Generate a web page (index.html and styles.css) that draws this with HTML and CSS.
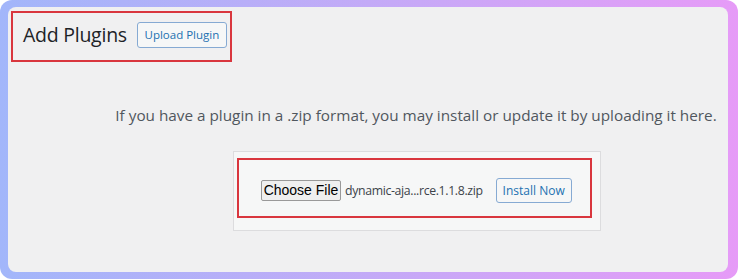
FILE: index.html
```html
<!DOCTYPE html>
<html>
	<head>
		<meta charset="UTF-8">
		<title>Add Plugins</title>
		<link rel="stylesheet" href="styles.css">
	</head>
	<body>
		<div class="frame">
			<div class="panel">
				<div class="head mark">
					<h1>Add Plugins</h1>
					<a class="btn upload-btn" href="javascript:;">Upload Plugin</a>
				</div>
				<p class="help">If you have a plugin in a .zip format, you may install or update it by uploading it here.</p>
				<div class="upload">
					<div class="form mark">
						<button class="choose" type="button">Choose File</button>
						<span class="fname">dynamic-aja...rce.1.1.8.zip</span>
						<a class="btn install" href="javascript:;">Install Now</a>
					</div>
				</div>
			</div>
		</div>
	</body>
</html>
```

FILE: styles.css
```css
*{padding: 0;margin: 0;box-sizing: border-box;}
body{background: #fff;font-family: "Open Sans", "Noto Sans", sans-serif;}
.frame{
	width: 738px;height: 279px;
	padding: 7px 10px 7px 8px;
	border-radius: 12px;
	background: linear-gradient(90deg, #a2b6fa 0%, #c3aaf7 50%, #e69bf7 100%);
}
.panel{
	height: 265px;
	background: #f0f0f1;
	border-radius: 8px;
	padding: 4px 0 0 3px;
	white-space: nowrap;
}
.mark{border: 2px solid #d9363e;}
.head{
	display: flex;align-items: center;
	width: 221px;height: 51px;
	padding: 0 0 4px 10px;
}
.head h1{
	font-size: 19.5px;font-weight: 400;
	color: #1d2327;
	margin-right: 10px;
	letter-spacing: -0.25px;
}
.btn{
	display: inline-flex;align-items: center;justify-content: center;
	flex-shrink: 0;
	height: 26px;padding: 0;
	font-size: 11.5px;
	color: #2271b1;text-decoration: none;
	background: #f6f7f7;
	border: 1px solid #86aad3;
	border-radius: 3px;
}
.upload-btn{width: 90px;}
.help{
	margin-top: 43px;
	padding-left: 93px;
	text-align: center;
	font-size: 15.3px;
	color: #50575e;
}
.upload{
	width: 368px;height: 80px;
	margin: 26px 0 0 222px;
	padding: 6px 0 0 3px;
	background: #f6f7f7;
	border: 1px solid #dcdcde;
}
.form{
	display: flex;align-items: center;
	width: 355px;height: 60px;
	padding: 4px 0 0 22px;
}
.choose{
	flex-shrink: 0;
	width: 80px;height: 21px;
	font-family: "Liberation Sans", Arial, sans-serif;
	font-size: 14px;color: #000;
	background: #efefef;
	border: 1px solid #999;
	border-radius: 2px;
}
.fname{
	margin-left: 4px;
	font-size: 12.3px;color: #3c434a;
	letter-spacing: -0.35px;
}
.install{
	margin-left: 13px;
	width: 76px;height: 25px;
	font-size: 12px;
}
```
